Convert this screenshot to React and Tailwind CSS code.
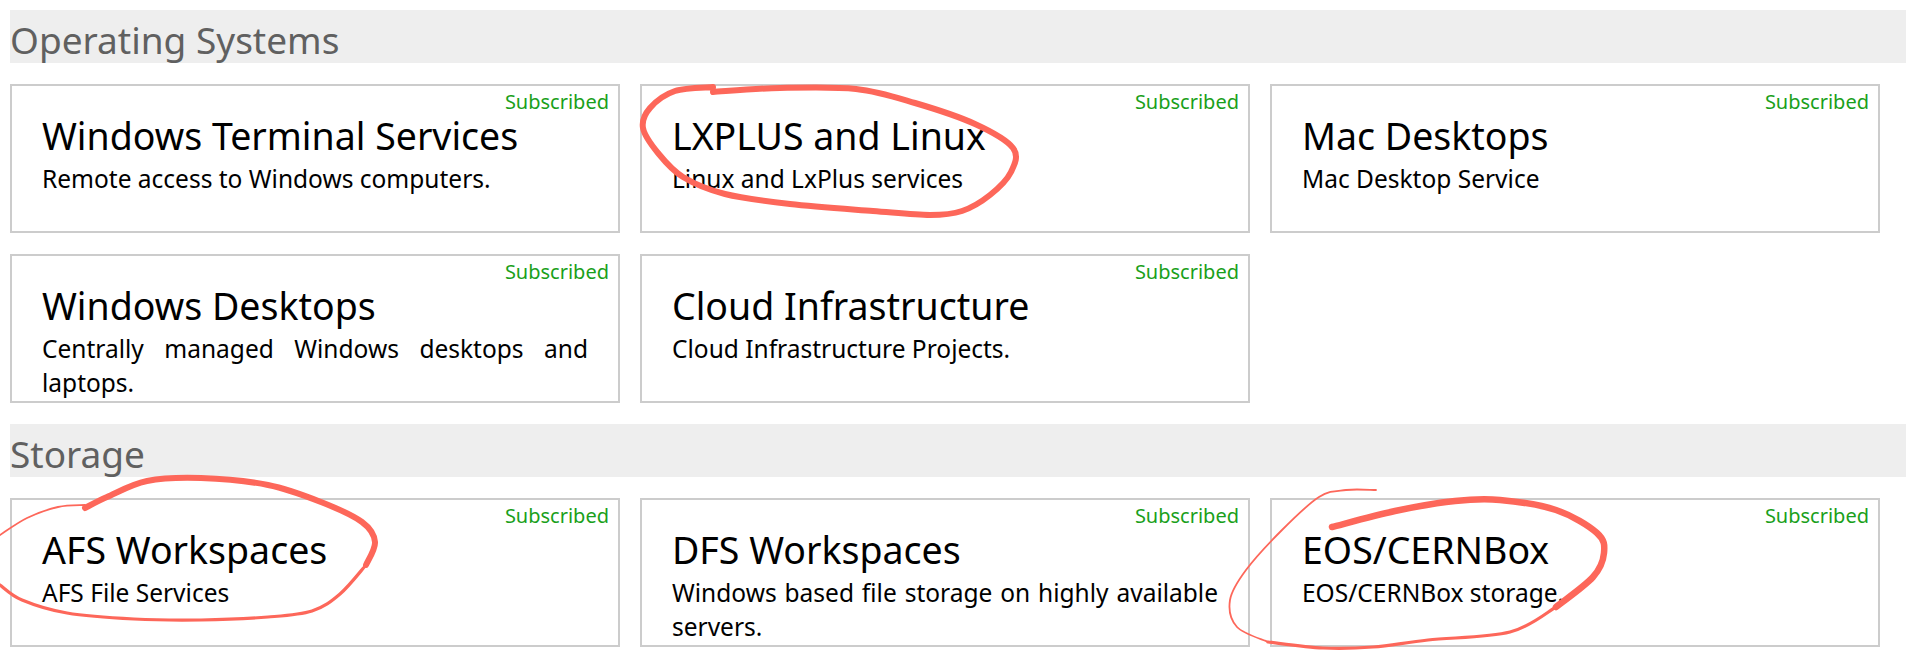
import React from 'react';

const sections = [
  {
    title: 'Operating Systems',
    cards: [
      { name: 'Windows Terminal Services', desc: 'Remote access to Windows computers.' },
      { name: 'LXPLUS and Linux', desc: 'Linux and LxPlus services' },
      { name: 'Mac Desktops', desc: 'Mac Desktop Service' },
      { name: 'Windows Desktops', desc: 'Centrally managed Windows desktops and laptops.' },
      { name: 'Cloud Infrastructure', desc: 'Cloud Infrastructure Projects.' },
    ],
  },
  {
    title: 'Storage',
    cards: [
      { name: 'AFS Workspaces', desc: 'AFS File Services' },
      { name: 'DFS Workspaces', desc: 'Windows based file storage on highly available servers.' },
      { name: 'EOS/CERNBox', desc: 'EOS/CERNBox storage.' },
    ],
  },
];

// hand-drawn marker strokes, as points in page pixels
const strokes = [
  // LXPLUS
  { w: 6, pts: [[713, 92], [780, 88], [856, 89], [915, 103], [975, 124], [1013, 148], [1011, 172], [990, 195], [962, 211], [930, 215], [873, 211], [790, 204], [725, 194], [683, 177], [658, 153], [643, 128], [650, 108], [675, 91], [713, 87]] },
  // AFS
  { w: 6, pts: [[85, 508], [107, 497], [147, 481], [201, 478], [268, 485], [321, 502], [362, 522], [375, 542], [366, 565]] },
  { w: 3.2, pts: [[366, 565], [340, 594], [312, 611], [268, 617], [201, 620], [134, 619], [67, 613], [22, 600], [0, 585]] },
  { w: 1.8, pts: [[0, 535], [27, 518], [58, 507], [85, 505]] },
  // EOS
  { w: 1.8, pts: [[1376, 490], [1346, 490], [1319, 497], [1282, 530], [1246, 570], [1230, 600], [1237, 627], [1268, 642]] },
  { w: 3.2, pts: [[1268, 642], [1323, 648], [1373, 647], [1428, 640], [1510, 632], [1556, 607]] },
  { w: 6.5, pts: [[1556, 607], [1593, 577], [1604, 553], [1597, 533], [1556, 510], [1500, 500], [1455, 501], [1395, 511], [1332, 527]] },
];

function smooth(pts) {
  let d = `M${pts[0][0]},${pts[0][1]}`;
  for (let i = 0; i < pts.length - 1; i++) {
    const p0 = pts[i - 1] || pts[i];
    const p1 = pts[i];
    const p2 = pts[i + 1];
    const p3 = pts[i + 2] || p2;
    const c1 = [p1[0] + (p2[0] - p0[0]) / 6, p1[1] + (p2[1] - p0[1]) / 6];
    const c2 = [p2[0] - (p3[0] - p1[0]) / 6, p2[1] - (p3[1] - p1[1]) / 6];
    d += ` C${c1[0]},${c1[1]} ${c2[0]},${c2[1]} ${p2[0]},${p2[1]}`;
  }
  return d;
}

function Card({ name, desc }) {
  return (
    <div className="relative h-[149px] border-2 border-[#cccccc] bg-white px-[30px] pt-[25px]">
      <div className="absolute top-[2px] right-[9px] text-[20px] leading-[27px] text-[#1a9f1a]">Subscribed</div>
      <div className="text-[37.5px] leading-[50px] text-black">{name}</div>
      <div className="mt-[1px] text-[24.5px] leading-[34px] text-black text-justify">{desc}</div>
    </div>
  );
}

export default function App() {
  return (
    <div className="relative w-[1916px] h-[666px] overflow-hidden bg-white px-[10px] pt-[10px] font-['Noto_Sans',sans-serif]">
      {sections.map((s, i) => (
        <div key={s.title} className={i > 0 ? 'mt-[21px]' : ''}>
          <div className="h-[53px] bg-[#eeeeee] pt-[6px] text-[37px] leading-[47px] text-[#606060]">{s.title}</div>
          <div className="mt-[21px] grid grid-cols-[repeat(3,610px)] gap-x-[20px] gap-y-[21px]">
            {s.cards.map((c) => (
              <Card key={c.name} {...c} />
            ))}
          </div>
        </div>
      ))}

      {/* red pen annotations on top of the page */}
      <svg className="pointer-events-none absolute inset-0" width="1916" height="666" viewBox="0 0 1916 666" fill="none">
        {strokes.map((s, i) => (
          <path key={i} d={smooth(s.pts)} stroke="#fd675a" strokeWidth={s.w} strokeLinecap="round" strokeLinejoin="round" />
        ))}
      </svg>
    </div>
  );
}
